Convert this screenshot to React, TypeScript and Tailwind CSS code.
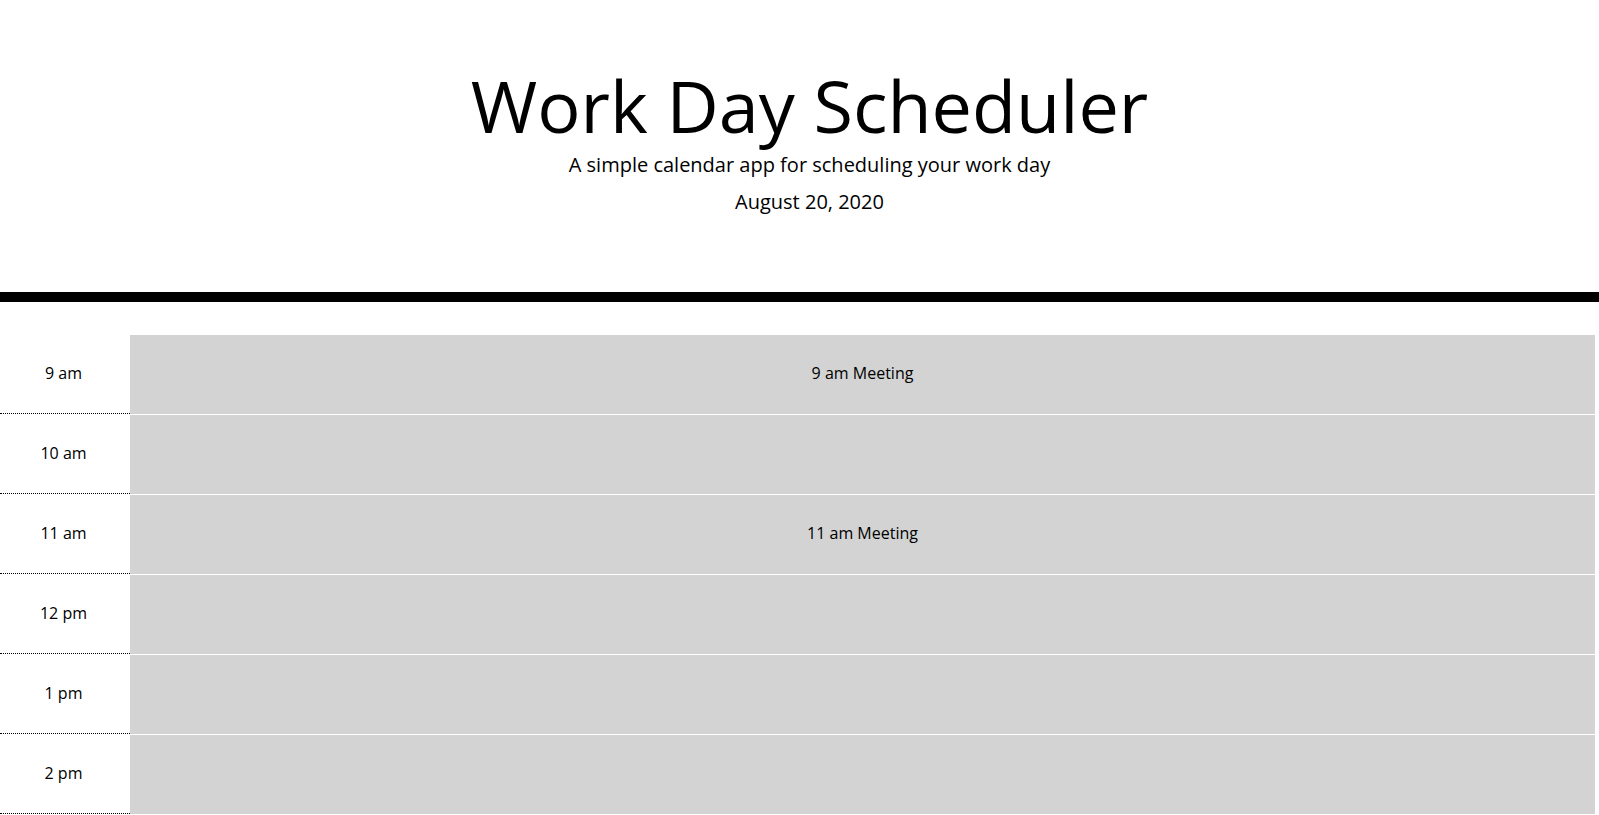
import React, { useState } from 'react';

const HOURS = [
  { label: '9 am', text: '9 am Meeting' },
  { label: '10 am', text: '' },
  { label: '11 am', text: '11 am Meeting' },
  { label: '12 pm', text: '' },
  { label: '1 pm', text: '' },
  { label: '2 pm', text: '' },
  { label: '3 pm', text: '' },
  { label: '4 pm', text: '' },
  { label: '5 pm', text: '' },
];

const TimeBlock: React.FC<{ label: string; text: string }> = ({ label, text }) => {
  const [value, setValue] = useState(text);
  return (
    <div className="flex h-[80px] border-t border-white">
      <div className="flex w-[130px] shrink-0 items-center justify-center border-b border-dotted border-black bg-white pr-[3px] pb-[3px] text-[16px] text-black">
        {label}
      </div>
      <div className="flex flex-1 items-center justify-center bg-[#d3d3d3] pb-[3px]">
        <input
          value={value}
          onChange={(e) => setValue(e.target.value)}
          className="w-full bg-transparent text-center text-[16px] text-black outline-none"
        />
      </div>
    </div>
  );
};

export default function App() {
  return (
    <div className="min-h-screen bg-white text-black" style={{ fontFamily: '"Open Sans", "Noto Sans", sans-serif' }}>
      {/* Header */}
      <header className="border-b-[10px] border-black pl-[20px] pt-[62px] pb-[75px] text-center">
        <h1 className="text-[72px] font-normal leading-[86px]">Work Day Scheduler</h1>
        <p className="mt-[2px] text-[20px] leading-[30px]">A simple calendar app for scheduling your work day</p>
        <p className="mt-[7px] text-[20px] leading-[30px]">August 20, 2020</p>
      </header>

      {/* Time blocks */}
      <div className="mt-[32px] mr-[4px]">
        {HOURS.map((h) => (
          <TimeBlock key={h.label} label={h.label} text={h.text} />
        ))}
      </div>
    </div>
  );
}
